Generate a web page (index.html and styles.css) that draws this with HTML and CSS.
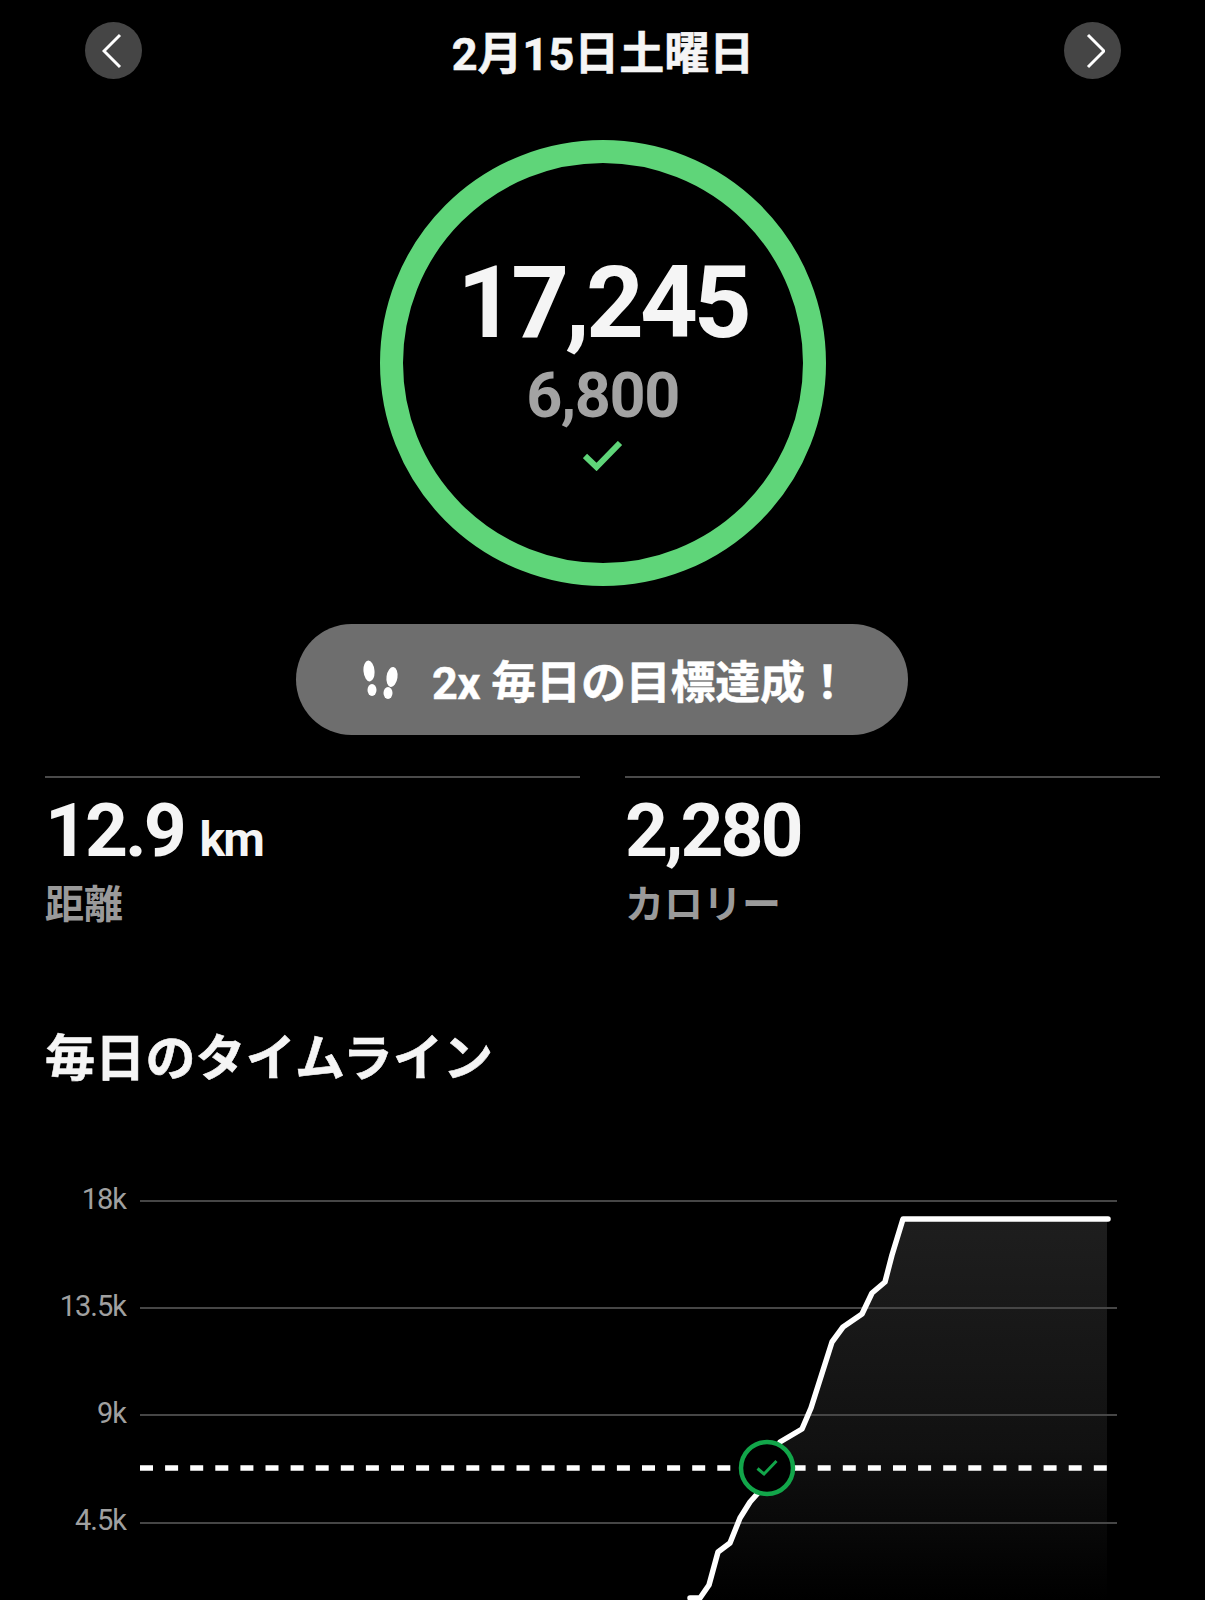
FILE: index.html
```html
<!DOCTYPE html>
<html lang="ja">
<head>
  <meta charset="UTF-8">
  <meta name="viewport" content="width=device-width, initial-scale=1.0">
  <title>毎日のタイムライン</title>
  <link rel="stylesheet" href="styles.css">
</head>
<body>
  <div class="page">
    <header class="day-nav">
      <button class="nav-btn" aria-label="前の日">
        <svg width="24" height="36" viewBox="0 0 24 36"><path class="chevron" d="M18 2 L2 18 L18 34"/></svg>
      </button>
      <h1 class="day-title">2月15日土曜日</h1>
      <button class="nav-btn" aria-label="次の日">
        <svg width="24" height="36" viewBox="0 0 24 36"><path class="chevron" d="M7 2 L23 18 L7 34"/></svg>
      </button>
    </header>

    <section class="ring-wrap">
      <div class="ring">
        <div class="ring-steps">17,245</div>
        <div class="ring-goal">6,800</div>
        <svg class="ring-check" width="40" height="30" viewBox="0 0 40 30"><path d="M2 15 L13.500 26 L37 2"/></svg>
      </div>
    </section>

    <div class="pill">
      <svg class="pill-feet" width="36" height="40" viewBox="0 0 36 40">
        <ellipse cx="6" cy="11" rx="5.500" ry="10.500" transform="rotate(-5 6 11)"/>
        <ellipse cx="9" cy="30" rx="4.500" ry="6"/>
        <ellipse cx="29" cy="17" rx="5.500" ry="10" transform="rotate(8 29 17)"/>
        <ellipse cx="25" cy="33" rx="4.500" ry="6"/>
      </svg>
      <span class="pill-text">2x 毎日の目標達成！</span>
    </div>

    <section class="stats">
      <div class="stat">
        <div class="stat-value">12.9 <span class="stat-unit">km</span></div>
        <div class="stat-label">距離</div>
      </div>
      <div class="stat">
        <div class="stat-value">2,280</div>
        <div class="stat-label">カロリー</div>
      </div>
    </section>

    <h2 class="section-title">毎日のタイムライン</h2>

    <svg class="chart" width="1205" height="420" viewBox="0 1180 1205 420">
      <defs>
        <linearGradient id="areaFade" x1="0" y1="0" x2="0" y2="1">
          <stop offset="0" stop-color="#1e1e1e"/>
          <stop offset="0.6" stop-color="#111"/>
          <stop offset="1" stop-color="#000"/>
        </linearGradient>
      </defs>
      <polygon fill="url(#areaFade)" points="700,1600 709,1585 718,1552 730,1543 740,1518 750,1502 758,1493 780,1442 802,1429 811,1408 832,1342 843,1327 862,1314 872,1293 885,1282 892,1255 903,1219 1107,1219 1107,1600"/>

      <line class="grid" x1="140" y1="1201" x2="1117" y2="1201"/>
      <line class="grid" x1="140" y1="1308" x2="1117" y2="1308"/>
      <line class="grid" x1="140" y1="1415" x2="1117" y2="1415"/>
      <line class="grid" x1="140" y1="1523" x2="1117" y2="1523"/>

      <text class="axis" x="126" y="1209">18k</text>
      <text class="axis" x="126" y="1316">13.5k</text>
      <text class="axis" x="126" y="1423">9k</text>
      <text class="axis" x="126" y="1530">4.5k</text>

      <line class="goal-line" x1="140" y1="1468" x2="1107" y2="1468"/>
      <polyline class="steps-line" points="690,1598 700,1598 709,1585 718,1552 730,1543 740,1518 750,1502 758,1493 780,1442 802,1429 811,1408 832,1342 843,1327 862,1314 872,1293 885,1282 892,1255 903,1219 1108,1219"/>

      <circle class="goal-marker" cx="767" cy="1468" r="26"/>
      <path class="goal-check" d="M757.500 1468.500 L764 1474 L776.500 1461"/>
    </svg>
  </div>
</body>
</html>
```

FILE: styles.css
```css
/* 共通 */
html, body {
  margin: 0;
  background: #000;
}
.page {
  width: 1205px;
  height: 1600px;
  overflow: hidden;
  background: #000;
  color: #f5f5f5;
  font-family: Roboto, "Noto Sans CJK JP", sans-serif;
}

/* ヘッダー */
.day-nav {
  display: flex;
  justify-content: space-between;
  align-items: center;
  padding: 22px 84px 0 85px;
  height: 57px;
}
.nav-btn {
  display: flex;
  align-items: center;
  justify-content: center;
  width: 57px;
  height: 57px;
  padding: 0;
  border: 0;
  border-radius: 50%;
  background: #454545;
}
.chevron {
  fill: none;
  stroke: #fff;
  stroke-width: 3;
}
.day-title {
  margin: 8px 0 0;
  font-size: 45px;
  font-weight: 700;
  line-height: 57px;
  -webkit-text-stroke: 0.600px #f5f5f5;
}

/* リング */
.ring-wrap {
  display: flex;
  justify-content: center;
  padding-top: 61px;
}
.ring {
  box-sizing: border-box;
  display: flex;
  flex-direction: column;
  align-items: center;
  width: 446px;
  height: 446px;
  padding-top: 89px;
  border: 23px solid #5fd579;
  border-radius: 50%;
}
.ring-steps {
  font-size: 101px;
  font-weight: 700;
  line-height: 101px;
  letter-spacing: -4px;
}
.ring-goal {
  margin-top: 11px;
  color: #a3a3a3;
  font-size: 63px;
  font-weight: 700;
  line-height: 63px;
  letter-spacing: -1.500px;
}
.ring-check {
  margin-top: 14px;
  fill: none;
  stroke: #5fd579;
  stroke-width: 6;
}

/* 目標達成 */
.pill {
  display: flex;
  align-items: center;
  box-sizing: border-box;
  width: 612px;
  height: 111px;
  margin: 38px 0 0 296px;
  padding-left: 67px;
  border-radius: 56px;
  background: #6e6e6e;
  color: #fff;
}
.pill-feet {
  fill: #fff;
}
.pill-text {
  margin-left: 33px;
  font-size: 45px;
  font-weight: 700;
  letter-spacing: -0.200px;
  white-space: nowrap;
  -webkit-text-stroke: 0.500px #fff;
}

/* 距離・カロリー */
.stats {
  display: flex;
  gap: 45px;
  margin: 41px 45px 0;
}
.stat {
  flex: 1;
  padding-top: 15px;
  border-top: 2px solid #4a4a4a;
}
.stat-value {
  font-size: 75px;
  font-weight: 700;
  line-height: 75px;
  letter-spacing: -3px;
}
.stat-unit {
  font-size: 48px;
  line-height: 1;
  letter-spacing: -2px;
}
.stat-label {
  margin-top: 14px;
  color: #9a9a9a;
  font-size: 39px;
  font-weight: 700;
  line-height: 46px;
}

/* タイムライン */
.section-title {
  margin: 101px 0 0 45px;
  font-size: 50px;
  font-weight: 700;
  line-height: 60px;
  letter-spacing: 0.200px;
  -webkit-text-stroke: 0.600px #f5f5f5;
}
.chart {
  display: block;
  margin-top: 91px;
}
.grid {
  stroke: #464646;
  stroke-width: 2;
}
.axis {
  fill: #a0a0a0;
  font-size: 29px;
  letter-spacing: -1px;
  text-anchor: end;
}
.goal-line {
  stroke: #fff;
  stroke-width: 5.500;
  stroke-dasharray: 13 12.100;
}
.steps-line {
  fill: none;
  stroke: #fff;
  stroke-width: 5.500;
  stroke-linejoin: round;
  stroke-linecap: round;
}
.goal-marker {
  fill: #000;
  stroke: #12a64a;
  stroke-width: 4.500;
}
.goal-check {
  fill: none;
  stroke: #12a64a;
  stroke-width: 3;
}
```
